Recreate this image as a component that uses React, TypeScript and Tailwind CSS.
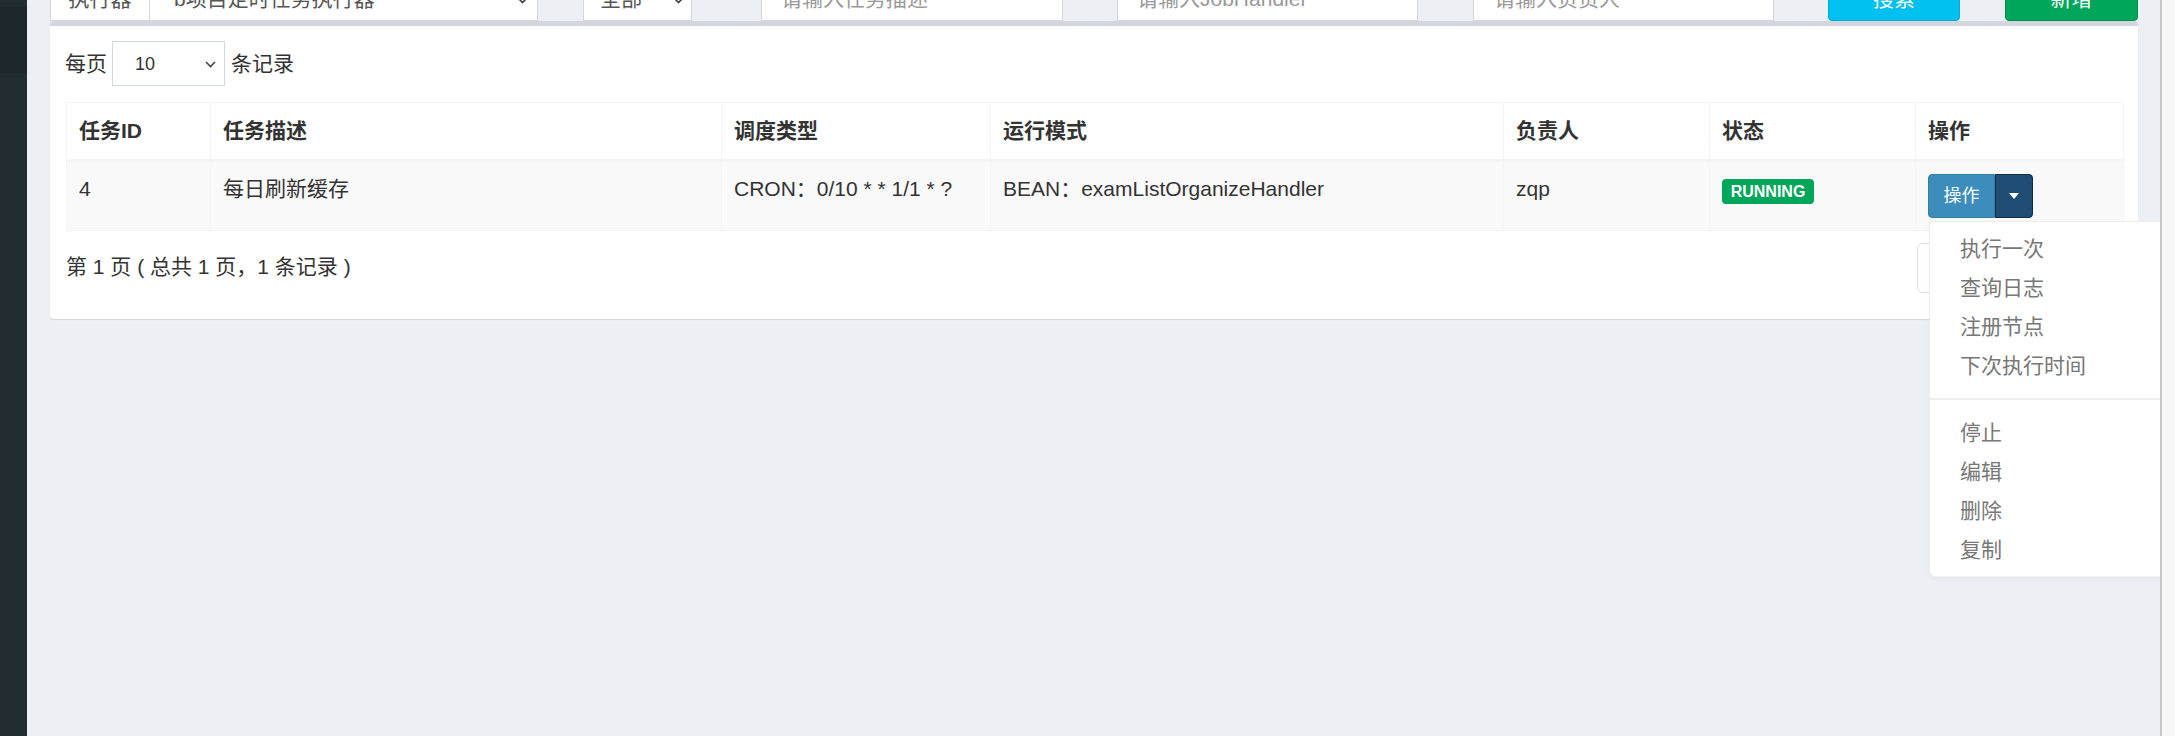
import React from 'react';

const COLUMNS = [
  { title: '任务ID', width: 144 },
  { title: '任务描述', width: 511 },
  { title: '调度类型', width: 269 },
  { title: '运行模式', width: 513 },
  { title: '负责人', width: 206 },
  { title: '状态', width: 206 },
  { title: '操作', width: 208 },
];

const MENU_TOP = ['执行一次', '查询日志', '注册节点', '下次执行时间'];
const MENU_BOTTOM = ['停止', '编辑', '删除', '复制'];

const Chevron: React.FC<{ className?: string }> = ({ className }) => (
  <svg className={className} width="11" height="7" viewBox="0 0 11 7" fill="none">
    <polyline points="1,1 5.5,5.5 10,1" stroke="#444" strokeWidth="1.6" />
  </svg>
);

const App: React.FC = () => {
  return (
    <div className="flex h-[736px] w-[2175px] overflow-hidden bg-[#ecf0f5] font-['Liberation_Sans','Noto_Sans_CJK_SC',sans-serif] text-[21px] text-[#333]">
      {/* sidebar */}
      <div className="w-[27px] shrink-0 bg-[#222d32] pt-[7px]">
        <div className="h-[66px] bg-[#1e282c]"></div>
      </div>

      <div className="relative flex-1 overflow-hidden pl-[23px] pr-[22px]">
        {/* filter bar, scrolled partly out of view */}
        <div className="-mt-[24px] flex h-[45px] text-[21px]">
          <div className="flex w-[488px]">
            <div className="flex w-[100px] items-center justify-center border border-[#d2d6de] bg-white text-[#555]">执行器</div>
            <div className="relative flex flex-1 items-center border border-l-0 border-[#d2d6de] bg-white pl-[24px] text-[#555]">
              b项目定时任务执行器
              <Chevron className="absolute right-[9px] top-[20px]" />
            </div>
          </div>
          <div className="relative ml-[45px] flex w-[109px] items-center border border-[#d2d6de] bg-white pl-[16px] text-[#555]">
            全部
            <Chevron className="absolute right-[7px] top-[20px]" />
          </div>
          <div className="ml-[69px] flex w-[302px] items-center border border-[#d2d6de] bg-white pl-[19px] text-[#999]">请输入任务描述</div>
          <div className="ml-[54px] flex w-[301px] items-center border border-[#d2d6de] bg-white pl-[19px] text-[#999]">请输入JobHandler</div>
          <div className="ml-[55px] flex w-[301px] items-center border border-[#d2d6de] bg-white pl-[20px] text-[#999]">请输入负责人</div>
          <div className="ml-[54px] flex w-[132px] items-center justify-center rounded-[4px] border border-[#00acd6] bg-[#00c0ef] text-white">搜索</div>
          <div className="ml-[45px] flex w-[133px] items-center justify-center rounded-[4px] border border-[#008d4c] bg-[#00a65a] text-white">新增</div>
        </div>

        {/* box */}
        <div className="rounded-[4px] border-t-[5px] border-[#d2d6de] bg-white px-[15px] pt-[15px] pb-[15px] shadow-[0_1px_1px_rgba(0,0,0,0.12)]">
          <div className="flex h-[45px] items-center leading-[30px]">
            <span>每页</span>
            <div className="relative ml-[5px] flex h-[45px] w-[113px] items-center border border-[#d2d6de] bg-white pl-[22px] text-[18px] text-[#333]">
              10
              <Chevron className="absolute right-[8px] top-[19px]" />
            </div>
            <span className="ml-[6px]">条记录</span>
          </div>

          <table className="mt-[16px] ml-px w-[2057px] table-fixed border-collapse leading-[30px]">
            <colgroup>
              {COLUMNS.map(c => (
                <col key={c.title} style={{ width: c.width }} />
              ))}
            </colgroup>
            <thead>
              <tr>
                {COLUMNS.map(c => (
                  <th key={c.title} className="border border-b-[3px] border-[#f4f4f4] px-[12px] py-[13px] text-left font-bold">
                    {c.title}
                  </th>
                ))}
              </tr>
            </thead>
            <tbody>
              <tr className="bg-[#f9f9f9]">
                <td className="border border-[#f4f4f4] px-[12px] py-[12px] align-top">4</td>
                <td className="border border-[#f4f4f4] px-[12px] py-[12px] align-top">每日刷新缓存</td>
                <td className="border border-[#f4f4f4] px-[12px] py-[12px] align-top">CRON：0/10 * * 1/1 * ?</td>
                <td className="border border-[#f4f4f4] px-[12px] py-[12px] align-top">BEAN：examListOrganizeHandler</td>
                <td className="border border-[#f4f4f4] px-[12px] py-[12px] align-top">zqp</td>
                <td className="border border-[#f4f4f4] px-[12px] py-[12px] align-top">
                  <span className="mt-[5px] inline-flex h-[25px] w-[92px] items-center justify-center rounded-[4px] bg-[#00a65a] text-[16px] leading-none font-bold text-white">RUNNING</span>
                </td>
                <td className="border border-[#f4f4f4] px-[12px] py-[12px] align-top">
                  <div className="relative inline-flex h-[44px]">
                    <div className="flex w-[67px] items-center justify-center rounded-l-[4px] border border-[#367fa9] bg-[#3c8dbc] text-[18px] text-white">操作</div>
                    <div className="flex w-[38px] items-center justify-center rounded-r-[4px] border border-[#122b40] bg-[#204d74]">
                      <svg width="10" height="6" viewBox="0 0 10 6">
                        <polygon points="0,0 10,0 5,6" fill="#fff" />
                      </svg>
                    </div>

                    {/* open dropdown */}
                    <div className="absolute top-full left-px z-10 mt-[3px] w-[240px] rounded-b-[6px] border border-[#eeeeee] bg-white py-[7px] text-[21px] leading-[30px] text-[#777] shadow-[0_2px_4px_rgba(0,0,0,0.04)]">
                      {MENU_TOP.map(m => (
                        <div key={m} className="py-[4.5px] pl-[30px]">{m}</div>
                      ))}
                      <div className="my-[13px] h-[2px] bg-[#eeeeee]"></div>
                      {MENU_BOTTOM.map(m => (
                        <div key={m} className="py-[4.5px] pl-[30px]">{m}</div>
                      ))}
                    </div>
                  </div>
                </td>
              </tr>
            </tbody>
          </table>

          <div className="mt-[12px] mb-[11px] flex items-start justify-between">
            <div className="pt-[9px] pl-px leading-[30px]">第 1 页 ( 总共 1 页，1 条记录 )</div>
            <div className="flex h-[50px] text-[#3c8dbc]">
              <div className="flex w-[78px] items-center justify-center rounded-l-[6px] border border-[#dddddd]">上页</div>
              <div className="flex w-[50px] items-center justify-center border border-l-0 border-[#dddddd]">1</div>
              <div className="flex w-[78px] items-center justify-center rounded-r-[6px] border border-l-0 border-[#dddddd]">下页</div>
            </div>
          </div>
        </div>
      </div>

      {/* scrollbar track */}
      <div className="w-[15px] shrink-0 border-l-2 border-[#c8c8c8] bg-[#f7f7f7]"></div>
    </div>
  );
};

export default App;
